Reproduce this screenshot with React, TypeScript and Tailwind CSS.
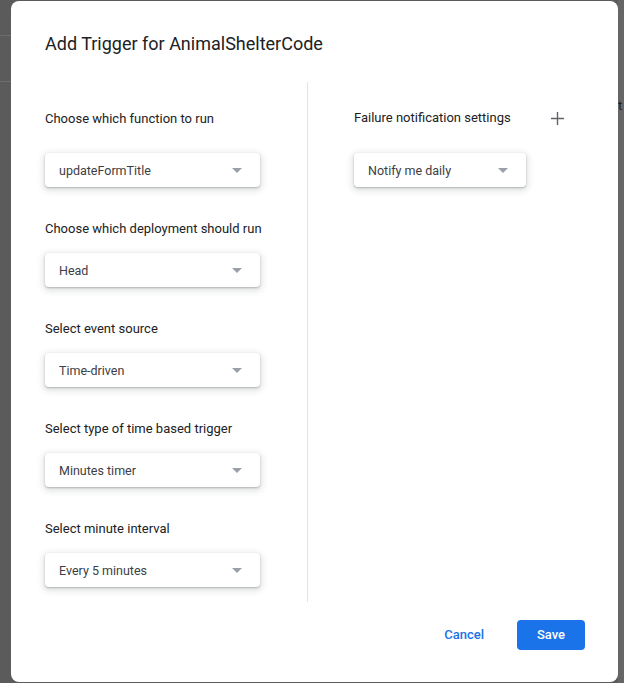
import React from "react";

function Caret() {
  return (
    <svg width="10" height="5" viewBox="0 0 10 5" className="shrink-0">
      <path d="M0 0 L10 0 L5 5 Z" fill="#9aa0a6" />
    </svg>
  );
}

function Select({ value, width }: { value: string; width: string }) {
  return (
    <div
      className={`${width} h-[34px] bg-white rounded-[4px] flex items-center justify-between pl-[14px] pr-[18px] shadow-[0_1px_2px_rgba(60,64,67,0.3),0_2px_6px_2px_rgba(60,64,67,0.15)]`}
    >
      <span className="text-[12.5px] leading-[16px] pt-[2px] text-[#3c4043]">{value}</span>
      <Caret />
    </div>
  );
}

function Group({ label, value, first }: { label: string; value: string; first?: boolean }) {
  return (
    <div className={first ? "" : "mt-[31px]"}>
      <div className={`h-[20px] leading-[22px] text-[13px] text-[#202124] ${first ? "mb-[25px]" : "mb-[15px]"}`}>{label}</div>
      <Select value={value} width="w-[215px]" />
    </div>
  );
}

export default function App() {
  return (
    <div
      className="w-[624px] h-[683px] bg-[#5b5b5b] flex overflow-hidden"
      style={{ fontFamily: "Roboto, 'Open Sans', Arial, sans-serif" }}
    >
      <div className="w-[11px] shrink-0 flex flex-col">
        <div className="h-[36px] border-b border-[#6e6e6e]" />
        <div className="h-[46px] border-b border-[#6e6e6e]" />
      </div>
      <div className="w-[607px] h-[681px] mt-[1px] bg-white rounded-[8px] flex flex-col shrink-0">
        <div className="pt-[31px] pl-[34px] h-[81px]">
          <h1 className="text-[18px] leading-[24px] text-[#202124]">Add Trigger for AnimalShelterCode</h1>
        </div>
        <div className="flex h-[520px]">
          <div className="w-[296px] pl-[34px] pt-[26px] shrink-0">
            <Group first label="Choose which function to run" value="updateFormTitle" />
            <Group label="Choose which deployment should run" value="Head" />
            <Group label="Select event source" value="Time-driven" />
            <Group label="Select type of time based trigger" value="Minutes timer" />
            <Group label="Select minute interval" value="Every 5 minutes" />
          </div>
          <div className="w-px bg-[#e3e3e3] shrink-0" />
          <div className="pl-[46px] pt-[26px] flex-1">
            <div className="flex items-center h-[20px] mb-[25px] w-[210px] justify-between">
              <span className="text-[13px] leading-[22px] text-[#202124]">Failure notification settings</span>
              <svg width="13" height="13" viewBox="0 0 13 13">
                <path d="M6.5 0 V13 M0 6.5 H13" stroke="#5f6368" strokeWidth="1.4" />
              </svg>
            </div>
            <Select value="Notify me daily" width="w-[172px]" />
          </div>
        </div>
        <div className="flex justify-end items-center pt-[18px] pr-[33px] gap-[17px]">
          <button className="h-[30px] px-[16px] text-[13px] font-medium text-[#1a73e8]">Cancel</button>
          <button className="h-[30px] w-[68px] rounded-[4px] bg-[#1a73e8] text-white text-[13px] font-medium">Save</button>
        </div>
      </div>
      <div className="w-[6px] shrink-0 bg-[#666666] pt-[96px] text-[13px] text-[#202124] overflow-hidden">t</div>
    </div>
  );
}
